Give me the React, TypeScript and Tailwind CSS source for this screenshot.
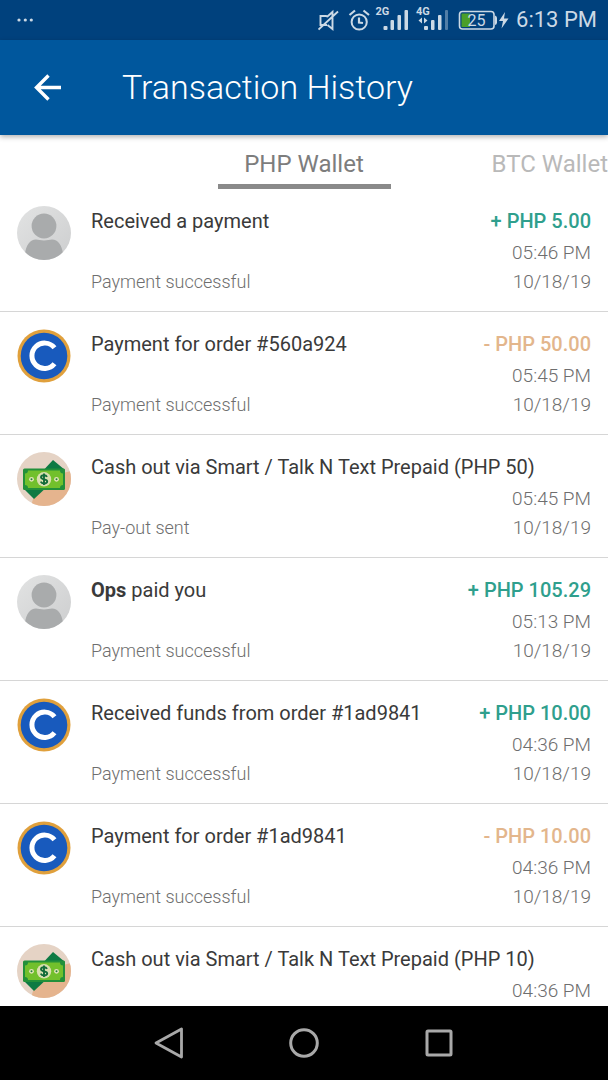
import React, { useState } from "react";

type Kind = "person" | "coins" | "cash";

interface Transaction {
  id: number;
  kind: Kind;
  sender?: string;
  title: string;
  status: string;
  amount?: string;
  time: string;
  date: string;
}

const transactions: Transaction[] = [
  { id: 1, kind: "person", title: "Received a payment", status: "Payment successful", amount: "+ PHP 5.00", time: "05:46 PM", date: "10/18/19" },
  { id: 2, kind: "coins", title: "Payment for order #560a924", status: "Payment successful", amount: "- PHP 50.00", time: "05:45 PM", date: "10/18/19" },
  { id: 3, kind: "cash", title: "Cash out via Smart / Talk N Text Prepaid (PHP 50)", status: "Pay-out sent", time: "05:45 PM", date: "10/18/19" },
  { id: 4, kind: "person", sender: "Ops", title: "paid you", status: "Payment successful", amount: "+ PHP 105.29", time: "05:13 PM", date: "10/18/19" },
  { id: 5, kind: "coins", title: "Received funds from order #1ad9841", status: "Payment successful", amount: "+ PHP 10.00", time: "04:36 PM", date: "10/18/19" },
  { id: 6, kind: "coins", title: "Payment for order #1ad9841", status: "Payment successful", amount: "- PHP 10.00", time: "04:36 PM", date: "10/18/19" },
  { id: 7, kind: "cash", title: "Cash out via Smart / Talk N Text Prepaid (PHP 10)", status: "Pay-out sent", time: "04:36 PM", date: "10/18/19" },
];

function PersonAvatar() {
  return (
    <svg viewBox="0 0 54 54" className="size-[54px] shrink-0" aria-hidden="true">
      <defs>
        <linearGradient id="person-bg" x1="0" y1="0" x2="1" y2="1">
          <stop offset="0" stopColor="#e2e3e3" />
          <stop offset="1" stopColor="#cdcecf" />
        </linearGradient>
        <clipPath id="person-clip">
          <circle cx="27" cy="27" r="27" />
        </clipPath>
      </defs>
      <g clipPath="url(#person-clip)">
        <rect width="54" height="54" fill="url(#person-bg)" />
        <circle cx="27" cy="20" r="12.400" fill="#a9abac" />
        <path d="M8 54V48c1-9 5-14.500 11-14.500 2.500 0 4.500 1 8 1s5.500-1 8-1c6 0 10 5.500 11 14.500v6z" fill="#a9abac" />
      </g>
    </svg>
  );
}

function CoinsAvatar() {
  return (
    <svg viewBox="0 0 54 54" className="size-[54px] shrink-0" aria-hidden="true">
      <circle cx="27" cy="27" r="26.500" fill="#e0a03c" />
      <circle cx="27" cy="27" r="23.300" fill="#185abd" />
      <path d="M37.500 18.800A12.700 12.700 0 1 0 37.500 34.800" fill="none" stroke="#fff" strokeWidth="5" />
    </svg>
  );
}

function CashAvatar() {
  return (
    <svg viewBox="0 0 54 54" className="size-[54px] shrink-0" aria-hidden="true">
      <defs>
        <clipPath id="cash-clip">
          <circle cx="27" cy="27" r="27" />
        </clipPath>
      </defs>
      <g clipPath="url(#cash-clip)">
        <rect width="54" height="54" fill="#e5d3c5" />
        <path d="M14 54l2-7 14-14 16-12 8-2v35z" fill="#e5b48e" />
        <path d="M8 38L36 8l12 10-31 29z" fill="#0d7a43" />
        <rect x="6" y="16.500" width="42" height="21.500" rx="1.500" fill="#22903a" />
        <path d="M11 18.500h32a3 3 0 0 0 3 3V33a3 3 0 0 0-3 3H11a3 3 0 0 0-3-3V21.500a3 3 0 0 0 3-3z" fill="#72c02c" />
        <circle cx="27" cy="27.300" r="7.200" fill="#d9dfb0" />
        <circle cx="14.500" cy="27.300" r="2.400" fill="#e3e4b8" />
        <circle cx="39.500" cy="27.300" r="2.400" fill="#e3e4b8" />
        <circle cx="14.500" cy="27.300" r="1" fill="#22803a" />
        <circle cx="39.500" cy="27.300" r="1" fill="#22803a" />
        <path d="M30 24.800c-.6-1.200-1.700-1.600-3-1.600-1.800 0-3 .8-3 2.100 0 2.900 6.200 1.200 6.200 4 0 1.400-1.400 2.200-3.200 2.200-1.500 0-2.700-.6-3.300-1.800M27 21.600V33" fill="none" stroke="#146c3a" strokeWidth="1.900" />
      </g>
    </svg>
  );
}

function Avatar({ kind }: { kind: Kind }) {
  if (kind === "person") return <PersonAvatar />;
  if (kind === "coins") return <CoinsAvatar />;
  return <CashAvatar />;
}

function StatusBar() {
  return (
    <div className="flex h-10 shrink-0 items-center justify-between bg-[#00417d] pr-[11px] pl-[17px] text-[#ccd9e5]">
      <svg viewBox="0 0 16 4" className="h-1 w-4" fill="currentColor" aria-hidden="true">
        <circle cx="2" cy="2" r="1.600" />
        <circle cx="8.300" cy="2" r="1.600" />
        <circle cx="14.300" cy="2" r="1.600" />
      </svg>
      <div className="flex items-center">
        {/* Muted, alarm and the two signal meters */}
        <svg viewBox="318 0 134 40" className="h-10 w-[134px]" fill="none" stroke="currentColor" aria-hidden="true">
          <path d="M327 25h-6.500v-9h5.500l1.500.5 5-4.500v17l-5-4M318.500 29.500L338 11.500" strokeWidth="1.900" />
          <circle cx="359.200" cy="22" r="7.600" strokeWidth="2" />
          <path d="M359 17.500v5l4 .5M349.500 15l5.500-4.500M369 15l-5.500-4.500" strokeWidth="2.200" />
          <g fill="currentColor" stroke="none">
            <text x="375.500" y="15" fontSize="11" fontWeight="700" fontFamily="Roboto, sans-serif">2G</text>
            <rect x="383.500" y="26" width="4" height="4" rx="1" />
            <rect x="390.500" y="20" width="3.500" height="10" rx="1" />
            <rect x="397.500" y="15" width="3.500" height="15" rx="1" />
            <rect x="404.500" y="10" width="3.500" height="20" rx="1" />
            <text x="416" y="15" fontSize="11" fontWeight="700" fontFamily="Roboto, sans-serif">4G</text>
            <path d="M422 17.500v6l-3.500-3zM424 17.500v6l3.500-3z" />
            <rect x="424" y="26" width="4" height="4" rx="1" />
            <rect x="431" y="20" width="3.500" height="10" rx="1" />
            <rect x="438" y="15" width="3.500" height="15" rx="1" />
            <rect x="445" y="10" width="3" height="20" rx="1" opacity="0.400" />
          </g>
        </svg>
        <svg viewBox="452 0 60 40" className="h-10 w-[60px]" aria-hidden="true">
          <rect x="459.500" y="11.500" width="34.500" height="17.500" rx="3" fill="none" stroke="currentColor" strokeWidth="1.600" />
          <rect x="461.500" y="13.500" width="8.500" height="13.500" fill="#4a9f2a" />
          <path d="M495 15.500q2 .5 2 2.500v4.500q0 2-2 2.500z" fill="currentColor" />
          <text x="476.500" y="26" fontSize="16" textAnchor="middle" fill="currentColor" fontFamily="Roboto, sans-serif">25</text>
          <path d="M505 12l-6 9h4l-1.500 7.500 7-10h-4.500z" fill="currentColor" />
        </svg>
        <span className="pl-1 text-[22px] leading-10">6:13 PM</span>
      </div>
    </div>
  );
}

function TransactionRow({ tx }: { tx: Transaction }) {
  return (
    <li className="flex shrink-0 gap-5 border-b border-[#d6d6d6] px-[17px] py-[17px]">
      <Avatar kind={tx.kind} />
      <div className="min-w-0 flex-1 whitespace-nowrap">
        <div className="flex justify-between text-[20px] leading-[30px] text-[#3a3a3a]">
          <h2>
            {tx.sender && <b>{tx.sender} </b>}
            {tx.title}
          </h2>
          {tx.amount && (
            <span className={tx.amount.startsWith("+") ? "font-medium text-[#2f9f8d]" : "font-medium text-[#e3b68c]"}>
              {tx.amount}
            </span>
          )}
        </div>
        <p className="text-right text-[19px] leading-[34px] font-light text-[#6e6e6e]">{tx.time}</p>
        <div className="flex justify-between leading-6 font-light text-[#6e6e6e]">
          <p className="text-[18px] leading-6">{tx.status}</p>
          <p className="text-[19px] leading-6">{tx.date}</p>
        </div>
      </div>
    </li>
  );
}

export default function App() {
  const [wallet, setWallet] = useState("PHP");

  return (
    <div className="flex h-screen flex-col overflow-hidden bg-white font-['Roboto',sans-serif]">
      <StatusBar />

      <header className="z-10 flex h-[95px] shrink-0 items-center bg-[#00579d] pl-[34px] text-white shadow-[0_2px_5px_rgba(0,0,0,0.3)]">
        <button type="button" aria-label="Back" className="mr-[61px]">
          <svg viewBox="0 0 27 27" className="size-[27px]" fill="none" stroke="currentColor" strokeWidth="3.400" aria-hidden="true">
            <path d="M27 13.500H3M14.500 1.500L2.500 13.500l12 12" />
          </svg>
        </button>
        <h1 className="text-[34px] font-light">Transaction History</h1>
      </header>

      <nav className="grid h-[54px] shrink-0 grid-cols-[1fr_173px_1fr] text-[24px]">
        <button
          type="button"
          onClick={() => setWallet("PHP")}
          aria-pressed={wallet === "PHP"}
          className="col-start-2 border-b-5 border-[#8a8a8a] pt-2 leading-[34px] text-[#7d7d7d]"
        >
          PHP Wallet
        </button>
        <button
          type="button"
          onClick={() => setWallet("BTC")}
          aria-pressed={wallet === "BTC"}
          className="self-start pt-3 text-right leading-[34px] whitespace-nowrap text-[#b9b9b9]"
        >
          BTC Wallet
        </button>
      </nav>

      <ul className="flex min-h-0 flex-1 flex-col overflow-y-auto [scrollbar-width:none]">
        {transactions.map((tx) => (
          <TransactionRow key={tx.id} tx={tx} />
        ))}
      </ul>

      <footer className="grid h-[74px] shrink-0 grid-cols-[1fr_135px_135px_135px_1fr] items-center justify-items-center bg-black text-[#a9a9a9]">
        <button type="button" aria-label="Back" className="col-start-2">
          <svg viewBox="0 0 32 32" className="size-8" fill="none" stroke="currentColor" strokeWidth="2.800" strokeLinejoin="round" aria-hidden="true">
            <path d="M28.500 2v28L3 16z" />
          </svg>
        </button>
        <button type="button" aria-label="Home">
          <svg viewBox="0 0 32 32" className="size-8" fill="none" stroke="currentColor" strokeWidth="3" aria-hidden="true">
            <circle cx="16" cy="16" r="13.300" />
          </svg>
        </button>
        <button type="button" aria-label="Recent apps">
          <svg viewBox="0 0 32 32" className="size-8" fill="none" stroke="currentColor" strokeWidth="3" strokeLinejoin="round" aria-hidden="true">
            <rect x="4" y="4" width="24" height="24" rx="1" />
          </svg>
        </button>
      </footer>
    </div>
  );
}
